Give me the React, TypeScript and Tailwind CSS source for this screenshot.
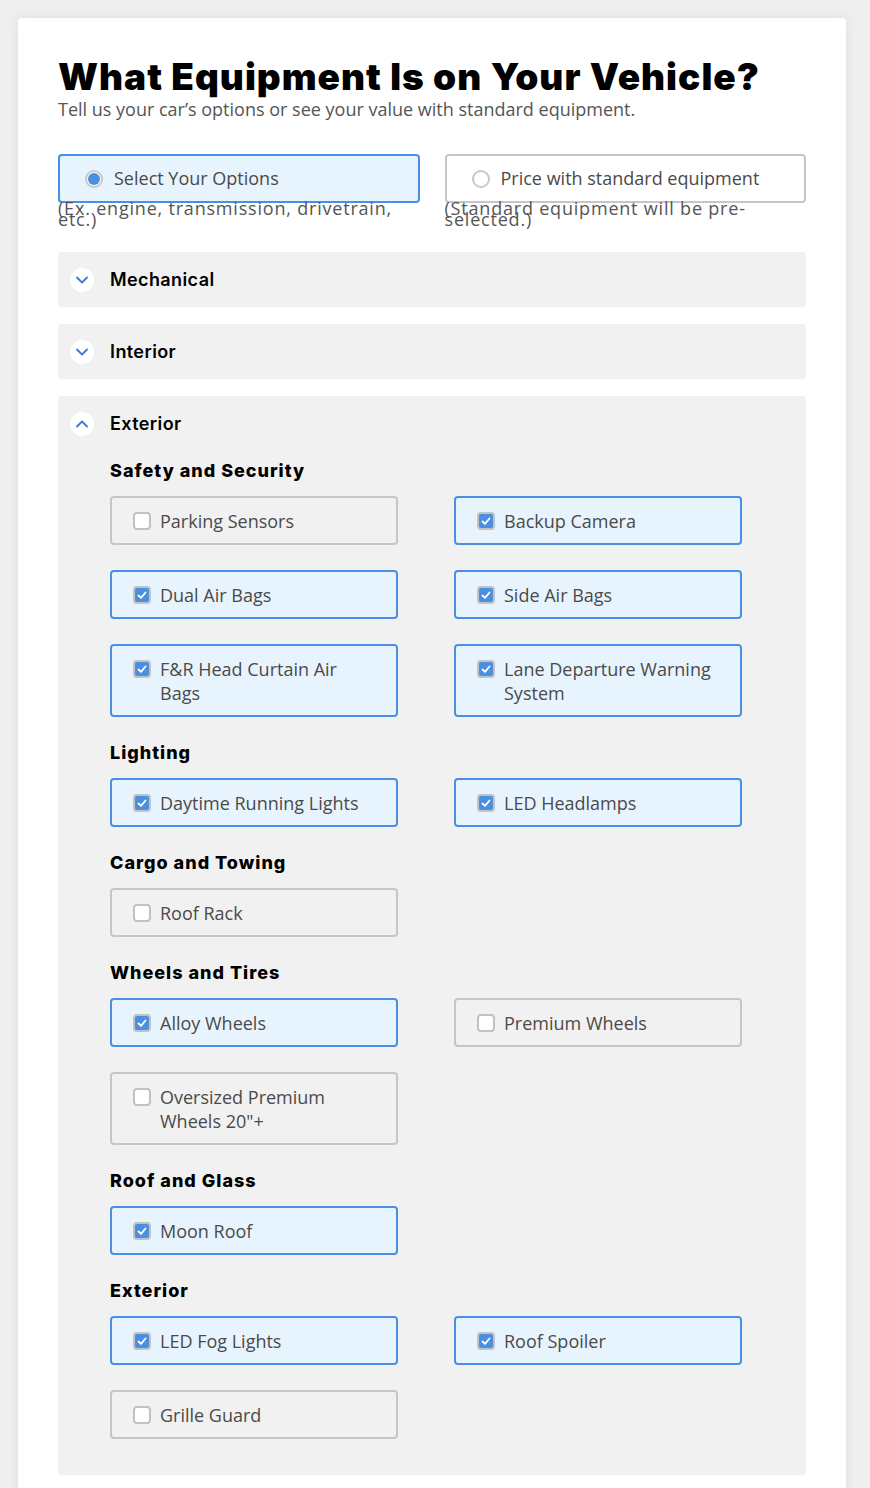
import { useState } from "react";

type Opt = { label: string; checked: boolean };
type Group = { title: string; items: Opt[] };

const groups: Group[] = [
  {
    title: "Safety and Security",
    items: [
      { label: "Parking Sensors", checked: false },
      { label: "Backup Camera", checked: true },
      { label: "Dual Air Bags", checked: true },
      { label: "Side Air Bags", checked: true },
      { label: "F&R Head Curtain Air Bags", checked: true },
      { label: "Lane Departure Warning System", checked: true },
    ],
  },
  {
    title: "Lighting",
    items: [
      { label: "Daytime Running Lights", checked: true },
      { label: "LED Headlamps", checked: true },
    ],
  },
  {
    title: "Cargo and Towing",
    items: [{ label: "Roof Rack", checked: false }],
  },
  {
    title: "Wheels and Tires",
    items: [
      { label: "Alloy Wheels", checked: true },
      { label: "Premium Wheels", checked: false },
      { label: "Oversized Premium Wheels 20\"+", checked: false },
    ],
  },
  {
    title: "Roof and Glass",
    items: [{ label: "Moon Roof", checked: true }],
  },
  {
    title: "Exterior",
    items: [
      { label: "LED Fog Lights", checked: true },
      { label: "Roof Spoiler", checked: true },
      { label: "Grille Guard", checked: false },
    ],
  },
];

const heavy = { fontFamily: "Inter, 'Noto Sans', sans-serif" };
const body = { fontFamily: "'Open Sans', 'Noto Sans', sans-serif" };

function Chevron({ up }: { up?: boolean }) {
  return (
    <span className="flex h-6 w-6 shrink-0 items-center justify-center rounded-full bg-white">
      <svg width="14" height="14" viewBox="0 0 14 14" fill="none">
        <path
          d={up ? "M2 9.5 L7 4.5 L12 9.5" : "M2 4.5 L7 9.5 L12 4.5"}
          stroke="#3a78d4"
          strokeWidth="1.8"
          strokeLinecap="round"
          strokeLinejoin="round"
        />
      </svg>
    </span>
  );
}

function CheckCard({ opt }: { opt: Opt }) {
  const [on, setOn] = useState(opt.checked);
  return (
    <label
      className={
        "flex cursor-pointer items-start gap-[9px] rounded-[4px] border-2 py-[10.5px] pl-[21px] pr-6 text-[18px] leading-6 text-[#4a4a4a] " +
        (on ? "border-[#4a90e2] bg-[#e8f4fd]" : "border-[#c6c6c6] bg-[#f1f1f1]")
      }
      style={body}
      onClick={() => setOn(!on)}
    >
      <span
        className={
          "mt-[3px] flex h-[18px] w-[18px] shrink-0 items-center justify-center rounded-[4px] border-2 border-[#c2c2c2] " +
          (on ? "bg-[#4a90e2]" : "bg-white")
        }
      >
        {on && (
          <svg width="10" height="10" viewBox="0 0 10 10" fill="none">
            <path d="M1.5 5.5 L4 7.8 L8.5 2.5" stroke="white" strokeWidth="1.8" strokeLinecap="round" strokeLinejoin="round" />
          </svg>
        )}
      </span>
      <span>{opt.label}</span>
    </label>
  );
}

function Radio({ on, label, note }: { on: boolean; label: string; note: string }) {
  return (
    <div>
      <div
        className={
          "flex h-[49px] items-center gap-[11px] rounded-[4px] border-2 pl-[25px] text-[18px] text-[#4a4a4a] " +
          (on ? "border-[#4a90e2] bg-[#e8f4fd]" : "border-[#c6c6c6] bg-white")
        }
      >
        <span className="flex h-[18px] w-[18px] items-center justify-center rounded-full border-2 border-[#c8c8c8] bg-white">
          {on && <span className="h-[12px] w-[12px] rounded-full bg-[#4a90e2]" />}
        </span>
        {label}
      </div>
      <p className="text-[18px] leading-[11px] tracking-[0.8px] text-[#555]">{note}</p>
    </div>
  );
}

export default function App() {
  return (
    <div className="min-h-screen bg-[#efefef] pl-[18px] pr-[24px] pt-[18px]" style={body}>
      <div className="rounded-[4px] bg-white px-10 pb-10 pt-[39px] shadow-[0_0_12px_rgba(0,0,0,0.08)]">
        <h1 className="text-[37px] font-black leading-[40px] tracking-[1px] text-black" style={heavy}>
          What Equipment Is on Your Vehicle?
        </h1>
        <p className="text-[18px] leading-6 text-[#555]">
          Tell us your car’s options or see your value with standard equipment.
        </p>

        <div className="mt-[33px] grid grid-cols-2 gap-x-[25px]">
          <Radio on label="Select Your Options" note="(Ex. engine, transmission, drivetrain, etc.)" />
          <Radio on={false} label="Price with standard equipment" note="(Standard equipment will be pre-selected.)" />
        </div>

        <div className="mt-[27px] flex flex-col gap-[17px]">
          {["Mechanical", "Interior"].map((t) => (
            <div key={t} className="flex h-[55px] items-center gap-4 rounded-[4px] bg-[#f1f1f1] pl-3">
              <Chevron />
              <span className="text-[18px] font-semibold tracking-[0.4px] text-black" style={heavy}>
                {t}
              </span>
            </div>
          ))}

          <div className="rounded-[4px] bg-[#f1f1f1] pb-9">
            <div className="flex h-[55px] items-center gap-4 pl-3">
              <Chevron up />
              <span className="text-[18px] font-semibold tracking-[0.4px] text-black" style={heavy}>
                Exterior
              </span>
            </div>
            <div className="flex flex-col gap-6 pl-[52px] pt-2">
              {groups.map((g) => (
                <div key={g.title}>
                  <h3 className="mb-[13px] text-[18px] font-extrabold leading-6 tracking-[1px] text-black" style={heavy}>
                    {g.title}
                  </h3>
                  <div className="grid grid-cols-[288px_288px] gap-x-[56px] gap-y-[25px]">
                    {g.items.map((o) => (
                      <CheckCard key={o.label} opt={o} />
                    ))}
                  </div>
                </div>
              ))}
            </div>
          </div>
        </div>
      </div>
    </div>
  );
}
